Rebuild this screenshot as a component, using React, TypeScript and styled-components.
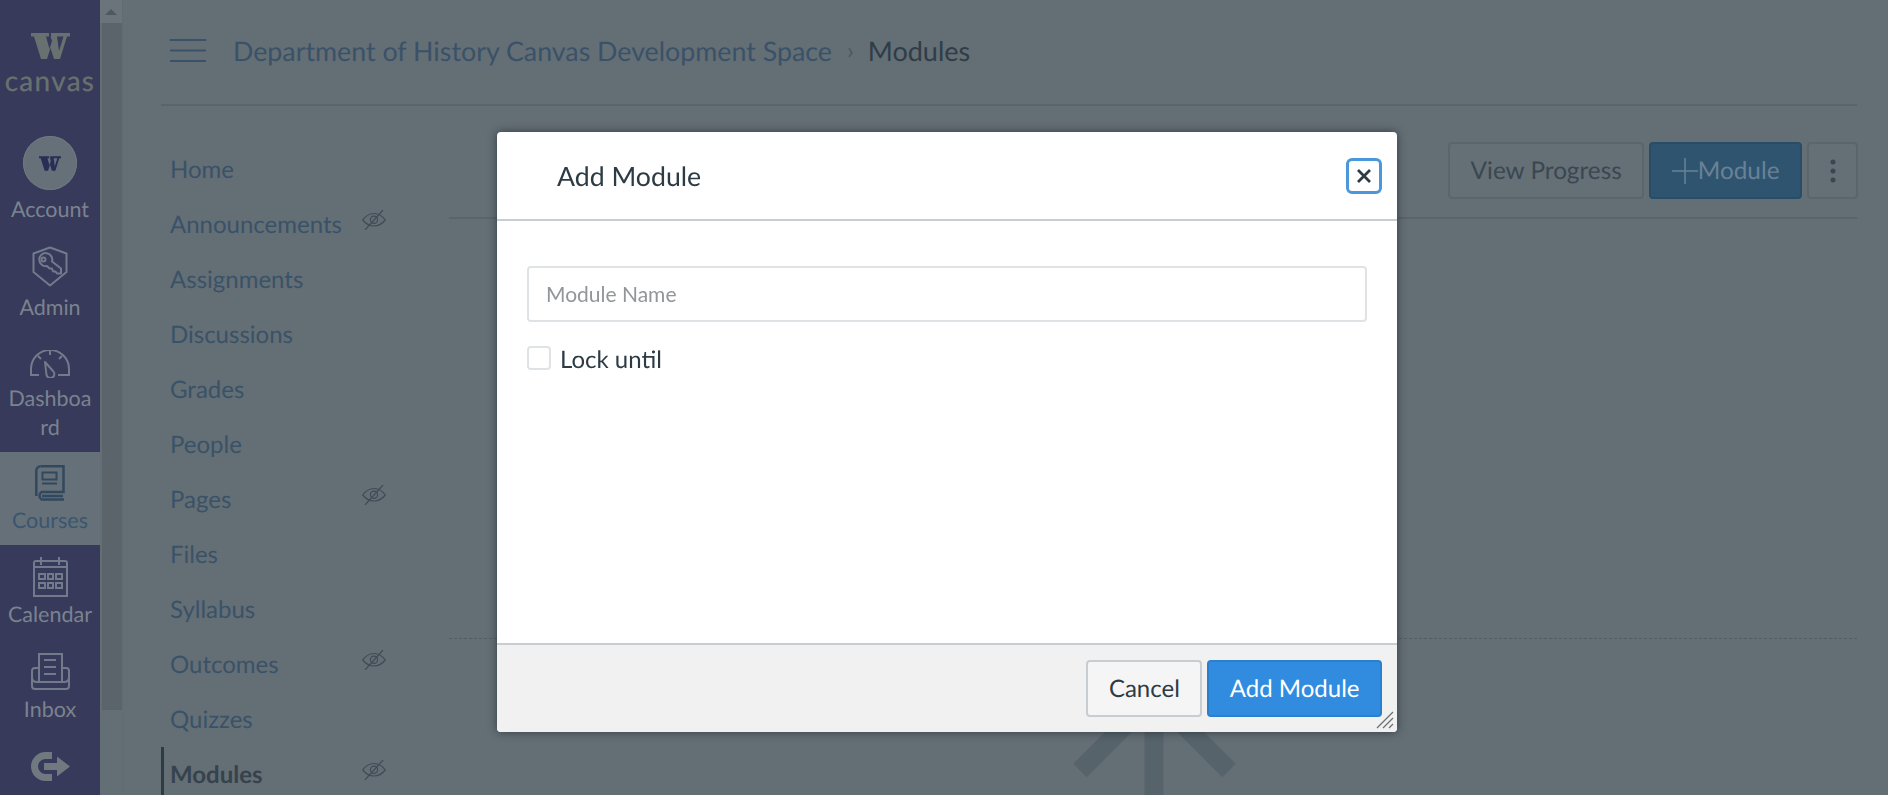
import React from "react";
import styled, { createGlobalStyle } from "styled-components";

const Global = createGlobalStyle`
  html, body { margin: 0; padding: 0; height: 100%; overflow: hidden; background: #646e75; }
  * { box-sizing: border-box; }
  body { font-family: Lato, "Open Sans", sans-serif; text-rendering: geometricPrecision; }
`;

const Page = styled.div`
  display: flex;
  width: 1888px;
  height: 795px;
  overflow: hidden;
  background: #646e75;
`;

const Nav = styled.nav`
  width: 100px;
  flex: none;
  background: #373a5a;
  display: flex;
  flex-direction: column;
`;
const Logo = styled.div`
  height: 123px;
  padding-top: 33px;
  display: flex;
  flex-direction: column;
  align-items: center;
  color: #687170;
`;
const LogoText = styled.div`
  font-size: 28px;
  line-height: 30px;
  margin-top: 6px;
  letter-spacing: 1.300px;
  font-weight: 400;
  -webkit-text-stroke: 0.3px #687170;
`;
const NavItem = styled.div<{ $h: number; $t: number; $active?: boolean }>`
  height: ${(p) => p.$h}px;
  padding-top: ${(p) => p.$t}px;
  display: flex;
  flex-direction: column;
  align-items: center;
  text-align: center;
  font-size: 21.500px;
  line-height: 29px;
  color: ${(p) => (p.$active ? "#3a566f" : "#7a838f")};
  background: ${(p) => (p.$active ? "#667079" : "transparent")};
  svg { display: block; flex: none; }
`;
const NavLabel = styled.div<{ $m: number }>`
  margin-top: ${(p) => p.$m}px;
  width: 100%;
  word-break: break-all;
  padding: 0 6px;
`;
const Avatar = styled.div`
  width: 54px;
  height: 54px;
  border-radius: 50%;
  background: #667079;
  box-shadow: inset 0 0 0 1px #6f7981;
  display: flex;
  align-items: center;
  justify-content: center;
`;

const ScrollTrack = styled.div`
  width: 23px;
  flex: none;
  padding-left: 2px;
  border-right: 1px solid #616b72;
  display: flex;
  flex-direction: column;
`;
const ScrollUp = styled.div`
  height: 23px;
  background: #6a747a;
  display: flex;
  align-items: center;
  justify-content: center;
  margin-left: -2px;
  &::before {
    content: "";
    border-left: 6px solid transparent;
    border-right: 6px solid transparent;
    border-bottom: 6px solid #4f585e;
  }
`;
const ScrollThumb = styled.div`
  height: 687px;
  background: #5a646a;
`;

const Wrapper = styled.div`
  flex: 1;
  min-width: 0;
  padding: 0 31px 0 38px;
`;
const Header = styled.header`
  height: 106px;
  display: flex;
  align-items: center;
  padding: 0 0 3px 9px;
  border-bottom: 2px solid #59646b;
`;
const Crumbs = styled.div`
  display: flex;
  align-items: center;
  margin-left: 27px;
  font-size: 26.800px;
  color: #3a5268;
`;
const Sep = styled.span`
  margin: 0 14px 0 15px;
  font-size: 24px;
  color: #4b5760;
`;
const Current = styled.span`
  font-size: 27px;
  color: #2f3d48;
`;
const Body = styled.div`
  display: flex;
  gap: 63px;
`;
const Side = styled.ul`
  list-style: none;
  margin: 35.500px 0 0;
  padding: 0;
  width: 225px;
  flex: none;
`;
const SideItem = styled.li<{ $active?: boolean }>`
  height: 55px;
  display: flex;
  align-items: center;
  justify-content: space-between;
  padding-left: ${(p) => (p.$active ? "6px" : "9px")};
  font-size: 24px;
  font-weight: ${(p) => (p.$active ? 700 : 400)};
  color: ${(p) => (p.$active ? "#36424c" : "#3a5268")};
  border-left: ${(p) => (p.$active ? "3px solid #2d3b45" : "0")};
  svg { margin-bottom: 8px; flex: none; }
`;
const Main = styled.main`
  flex: 1;
  min-width: 0;
`;
const Toolbar = styled.div`
  height: 113px;
  padding-top: 36px;
  display: flex;
  justify-content: flex-end;
  gap: 5px;
  border-bottom: 2px solid #59646b;
`;
const ToolButton = styled.div<{ $primary?: boolean }>`
  height: 57px;
  padding: 0 20.500px;
  border-radius: 4px;
  display: flex;
  align-items: center;
  font-size: 24.320px;
  background: ${(p) => (p.$primary ? "#2e5470" : "#656f76")};
  border: 2px solid ${(p) => (p.$primary ? "#2a4d67" : "#5b656c")};
  color: ${(p) => (p.$primary ? "#6a8195" : "#3a4751")};
`;
const Kebab = styled(ToolButton)`
  padding: 0;
  width: 51px;
  margin-right: -1px;
  justify-content: center;
`;
const Empty = styled.div`
  margin-top: 419px;
  border-top: 1px dashed #525c63;
  height: 200px;
  display: flex;
  justify-content: center;
`;
const Rays = styled.svg`
  margin: 41px 0 0 3px;
  flex: none;
`;

const Modal = styled.div`
  position: fixed;
  left: 497px;
  top: 132px;
  width: 900px;
  height: 600px;
  background: #fff;
  border-radius: 4px;
  box-shadow: 0 0 10px rgba(30, 40, 46, 0.7);
  display: flex;
  flex-direction: column;
  color: #2d3b45;
`;
const ModalHead = styled.div`
  height: 89px;
  flex: none;
  border-bottom: 2px solid #c7cdd1;
  display: flex;
  align-items: center;
  justify-content: space-between;
  padding: 0 15px 0 60px;
`;
const ModalTitle = styled.h2`
  margin: 0;
  font-size: 26.700px;
  font-weight: 400;
`;
const Close = styled.button`
  width: 36px;
  height: 36px;
  padding: 0;
  background: #fff;
  border: 3px solid #4a98d9;
  border-radius: 6px;
  display: flex;
  align-items: center;
  justify-content: center;
`;
const ModalBody = styled.div`
  flex: 1;
  padding: 45px 30px 0;
`;
const NameInput = styled.input`
  display: block;
  width: 100%;
  height: 56px;
  padding: 0 17px 2px;
  border: 2px solid #dfe3e6;
  border-radius: 4px;
  font: 400 21px Lato, sans-serif;
  color: #2d3b45;
  outline: none;
  &::placeholder { color: #929699; opacity: 1; }
`;
const LockRow = styled.label`
  display: flex;
  align-items: flex-start;
  margin-top: 24px;
  font-size: 24px;
  line-height: 28px;
`;
const Check = styled.span`
  width: 24px;
  height: 24px;
  flex: none;
  margin-right: 9px;
  border: 2px solid #dfe3e6;
  border-radius: 4px;
`;
const ModalFoot = styled.div`
  height: 89px;
  flex: none;
  border-top: 2px solid #c7cdd1;
  background: #f1f1f1;
  border-radius: 0 0 4px 4px;
  padding: 15px 15px 0;
  display: flex;
  justify-content: flex-end;
  gap: 5px;
  position: relative;
`;
const FootButton = styled.button<{ $primary?: boolean }>`
  height: 57px;
  padding: 0 20.500px;
  border-radius: 4px;
  font: 400 24px Lato, sans-serif;
  text-rendering: geometricPrecision;
  background: ${(p) => (p.$primary ? "#318ce0" : "#f5f5f5")};
  color: ${(p) => (p.$primary ? "#fff" : "#2d3b45")};
  border: 2px solid ${(p) => (p.$primary ? "#2b80cd" : "#c7cdd1")};
`;
const Grip = styled.svg`
  position: absolute;
  right: 3px;
  bottom: 3px;
`;

const WMark = ({ w, h, c }: { w: number; h: number; c: string }) => (
  <svg width={w} height={h} viewBox="0 0 39 26">
    <path
      fill={c}
      fillRule="evenodd"
      d="M0 0H18V3.500H15L18.500 16L21 8L19.500 3.500H20V0H39V3.500H36L29 26H23L19.500 15L16 26H10L3 3.500H0Z M26 3.500H32.500L28 18Z"
    />
  </svg>
);

const EyeOff = () => (
  <svg width="24" height="20" viewBox="0 0 24 20" fill="none" stroke="#3f4c56" strokeWidth="1.2">
    <path d="M.7 10C4 5.500 8 3.500 12 3.500s8 2 11.300 6.500C20 14 16 16 12 16S4 14 .7 10z" />
    <circle cx="12" cy="9.800" r="3.600" />
    <path d="M3 20L21 0" />
  </svg>
);

const sideItems: { label: string; off?: boolean; active?: boolean }[] = [
  { label: "Home" },
  { label: "Announcements", off: true },
  { label: "Assignments" },
  { label: "Discussions" },
  { label: "Grades" },
  { label: "People" },
  { label: "Pages", off: true },
  { label: "Files" },
  { label: "Syllabus" },
  { label: "Outcomes", off: true },
  { label: "Quizzes" },
  { label: "Modules", off: true, active: true },
];

export default function App() {
  const icon = "#727b8b";
  return (
    <Page>
      <Global />
      <Nav>
        <Logo>
          <WMark w={39} h={26} c="#687170" />
          <LogoText>canvas</LogoText>
        </Logo>
        <NavItem $h={110} $t={13}>
          <Avatar>
            <WMark w={22} h={15} c="#2a2d55" />
          </Avatar>
          <NavLabel $m={5}>Account</NavLabel>
        </NavItem>
        <NavItem $h={104} $t={13}>
          <svg width="36" height="41" viewBox="0 0 36 41" fill="none" stroke={icon} strokeWidth="2">
            <path d="M18 1.500L34.500 7.500V26L18 39.500L1.500 26V7.500Z" strokeLinejoin="round" />
            <path d="M15 20a6.500 6.500 0 1 1 5-4.500l9 7v5h-4l-1.500-2h-2.500l-1-3h-2.500z" strokeLinejoin="round" />
            <circle cx="11.500" cy="13.500" r="2" />
          </svg>
          <NavLabel $m={6}>Admin</NavLabel>
        </NavItem>
        <NavItem $h={115} $t={13}>
          <svg width="40" height="28" viewBox="0 0 40 28" fill="none" stroke={icon} strokeWidth="2">
            <path d="M9 25H1v-6a19 19 0 0 1 38 0v6h-11" />
            <path d="M20 1v4M8 6l3 3M32 6l-3 3" />
            <path d="M15 12l8 9a4 4 0 1 1-6.500 4z" strokeLinejoin="round" />
          </svg>
          <NavLabel $m={6}>Dashboard</NavLabel>
        </NavItem>
        <NavItem $h={93} $t={13} $active>
          <svg width="30" height="36" viewBox="0 0 30 36" fill="none" stroke="#32485f" strokeWidth="2.500">
            <path d="M5.500 1.300H28.500V27H6.500a4.500 4.500 0 0 0 0 7.500H29" />
            <path d="M1.300 31V5.500a4.200 4.200 0 0 1 4.200-4.200" />
            <path d="M28 31H7" />
            <rect x="7.500" y="7.500" width="14" height="7" strokeWidth="2" />
            <path d="M7 18.500h15" strokeWidth="2" />
          </svg>
          <NavLabel $m={5}>Courses</NavLabel>
        </NavItem>
        <NavItem $h={97} $t={12}>
          <svg width="35" height="40" viewBox="0 0 35 40" fill="none" stroke={icon} strokeWidth="2">
            <path d="M1 39V6a2 2 0 0 1 2-2h29a2 2 0 0 1 2 2v33z" />
            <path d="M1 10h33M8 0v8M26 0v8" />
            <path d="M6 17h6v5H6zM15 17h5v5h-5zM23 17h6v5h-6zM6 26h6v5H6zM15 26h5v5h-5zM23 26h6v5h-6z" />
          </svg>
          <NavLabel $m={3}>Calendar</NavLabel>
        </NavItem>
        <NavItem $h={98} $t={11}>
          <svg width="39" height="37" viewBox="0 0 39 37" fill="none" stroke={icon} strokeWidth="2">
            <path d="M8 28V1h23v27" />
            <path d="M8 15H4a3 3 0 0 0-3 3v15a3 3 0 0 0 3 3h31a3 3 0 0 0 3-3V18a3 3 0 0 0-3-3h-4" />
            <path d="M1 24c0 3 2 5 5 5h27c3 0 5-2 5-5" />
            <path d="M13 7h12M13 14h12M13 21h12" />
          </svg>
          <NavLabel $m={5}>Inbox</NavLabel>
        </NavItem>
        <NavItem $h={55} $t={12}>
          <svg width="39" height="29" viewBox="0 0 39 29" fill="#6f797f">
            <path d="M21 0H14.500a14.500 14.500 0 0 0 0 29H21V22H14.500a7.500 7.500 0 0 1 0-15H21Z" />
            <path d="M26 4.500L39 14.500L26 24.500V18H13V11H26Z" />
          </svg>
        </NavItem>
      </Nav>
      <ScrollTrack>
        <ScrollUp />
        <ScrollThumb />
      </ScrollTrack>
      <Wrapper>
        <Header>
          <svg width="36" height="23" viewBox="0 0 36 23" stroke="#3a5268" strokeWidth="2">
            <path d="M0 1h36M0 11.500h36M0 22h36" />
          </svg>
          <Crumbs>
            Department of History Canvas Development Space
            <Sep>›</Sep>
            <Current>Modules</Current>
          </Crumbs>
        </Header>
        <Body>
          <Side>
            {sideItems.map((it) => (
              <SideItem key={it.label} $active={it.active}>
                {it.label}
                {it.off && <EyeOff />}
              </SideItem>
            ))}
          </Side>
          <Main>
            <Toolbar>
              <ToolButton>View Progress</ToolButton>
              <ToolButton $primary>
                <svg width="26" height="26" viewBox="0 0 26 26" stroke="#6a8195" strokeWidth="1.500">
                  <path d="M13 0v26M0 13h26" />
                </svg>
                Module
              </ToolButton>
              <Kebab>
                <svg width="6" height="24" viewBox="0 0 6 24" fill="#3a4751">
                  <circle cx="3" cy="3" r="2.500" />
                  <circle cx="3" cy="12" r="2.500" />
                  <circle cx="3" cy="21" r="2.500" />
                </svg>
              </Kebab>
            </Toolbar>
            <Empty>
              <Rays width="190" height="155" viewBox="0 0 190 155" stroke="#56636b" strokeWidth="19">
                <path d="M20 90.500L80 30.500M169 90.500L109 30.500M94 20V155" />
              </Rays>
            </Empty>
          </Main>
        </Body>
      </Wrapper>
      <Modal>
        <ModalHead>
          <ModalTitle>Add Module</ModalTitle>
          <Close aria-label="Close">
            <svg width="14" height="14" viewBox="0 0 14 14" stroke="#2d3b45" strokeWidth="2.800">
              <path d="M1 1l12 12M13 1L1 13" />
            </svg>
          </Close>
        </ModalHead>
        <ModalBody>
          <NameInput placeholder="Module Name" />
          <LockRow>
            <Check />
            Lock until
          </LockRow>
        </ModalBody>
        <ModalFoot>
          <FootButton>Cancel</FootButton>
          <FootButton $primary>Add Module</FootButton>
          <Grip width="18" height="18" viewBox="0 0 18 18" stroke="#6c7175" strokeWidth="1.300">
            <path d="M1 17L17 1M7 17L17 7M13 17l4-4" />
          </Grip>
        </ModalFoot>
      </Modal>
    </Page>
  );
}
